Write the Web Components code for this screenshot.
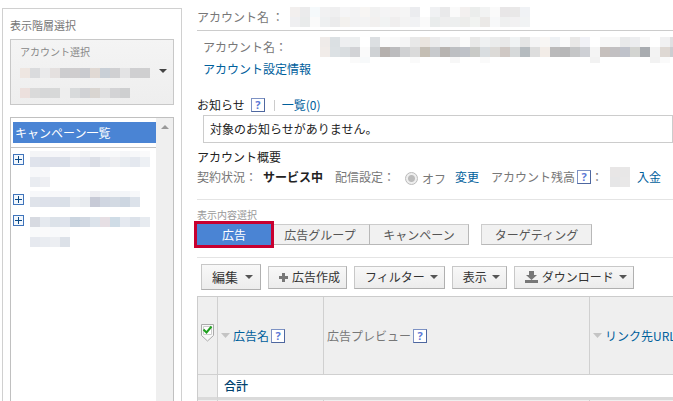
<!DOCTYPE html>
<html lang="ja">
<head>
<meta charset="utf-8">
<title>広告管理</title>
<style>
  body {
    margin: 0;
    overflow: hidden;
    background: #fff;
    color: #222;
    font: 12px/20px "Noto Sans CJK JP", "Liberation Sans", sans-serif;
  }
</style>
</head>
<body>
<ad-console></ad-console>

<script>
// Masked value: each row is "height colour colour ...", "-" leaves a cell empty
class MaskedValue extends HTMLElement {
  connectedCallback() {
    this.attachShadow({ mode: 'open' });
    let y = 0;
    let width = 0;
    let rects = '';
    this.getAttribute('rows').split(';').forEach((row) => {
      const [h, ...cells] = row.trim().split(/\s+/);
      cells.forEach((c, i) => {
        if (c !== '-') rects += `<rect x="${i * 10}" y="${y}" width="10" height="${h}" fill="#${c}"/>`;
      });
      width = Math.max(width, cells.length * 10);
      y += Number(h);
    });
    this.shadowRoot.innerHTML = `
      <style>
        :host { display: block; flex: none; }
        svg { display: block; }
      </style>
      <svg width="${width}" height="${y}" shape-rendering="crispEdges" aria-hidden="true">${rects}</svg>
    `;
  }
}

class HelpIcon extends HTMLElement {
  connectedCallback() {
    this.attachShadow({ mode: 'open' });
    this.shadowRoot.innerHTML = `
      <style>
        :host { display: inline-flex; vertical-align: middle; flex: none; }
        button {
          width: 14px;
          height: 14px;
          padding: 0;
          border: 1px solid #7d92c4;
          border-right-color: #4e679f;
          border-bottom-color: #4e679f;
          background: #fff;
          color: #5b78d6;
          font: bold 11px/12px "Open Sans", sans-serif;
          text-align: center;
        }
      </style>
      <button type="button">?</button>
    `;
  }
}

class SidePanel extends HTMLElement {
  connectedCallback() {
    this.attachShadow({ mode: 'open' });
    this.shadowRoot.innerHTML = `
      <style>
        :host {
          display: flex;
          flex-direction: column;
          box-sizing: border-box;
          flex: none;
          width: 180px;
          margin: 8px 0 0 2px;
          padding: 6px 7px 7px;
          border: 1px solid #d0d0d0;
        }
        h2 {
          margin: 0 0 4px;
          color: #777;
          font-size: 11px;
          font-weight: normal;
          line-height: 20px;
        }
      </style>
      <h2>表示階層選択</h2>
      <slot></slot>
    `;
  }
}

class AccountPicker extends HTMLElement {
  connectedCallback() {
    this.attachShadow({ mode: 'open' });
    this.shadowRoot.innerHTML = `
      <style>
        :host { display: block; margin-bottom: 12px; }
        button {
          display: flex;
          align-items: center;
          justify-content: space-between;
          box-sizing: border-box;
          width: 100%;
          height: 66px;
          padding: 0 6px 2px 9px;
          border: 1px solid #c8c8c8;
          background: linear-gradient(#f4f4f4, #eee);
          color: #888;
          font: inherit;
          text-align: left;
        }
        .name { display: block; font-size: 10px; line-height: 16px; margin-bottom: 8px; }
        masked-value + masked-value { margin-top: 10px; }
      </style>
      <button type="button">
        <span>
          <span class="name">アカウント選択</span>
          <masked-value rows="10 eee6e1 dadbdd eaeaeb e4e0df cdcdcf cfcdce cacbcf e0d9d4 c9cfd6 d0d0d2 e3e3e4 cfcfd1 cfcfd0"></masked-value>
          <masked-value rows="10 ece0dd dadada d6d7d8 d7d8d8 eeeeee d8dadb d1d2d5 d9d5d1 e0e0e1 d3d3d5 cecfd0"></masked-value>
        </span>
        <svg width="8" height="4" aria-hidden="true"><path d="M0 0h8L4 4z" fill="#444"/></svg>
      </button>
    `;
  }
}

class CampaignTree extends HTMLElement {
  connectedCallback() {
    this.attachShadow({ mode: 'open' });
    this.shadowRoot.innerHTML = `
      <style>
        :host {
          display: flex;
          flex: 1;
          border: 1px solid #c0c0c0;
        }
        .tree { flex: 1; min-width: 0; }
        .head { padding: 4px 0 4px 2px; border-bottom: 1px solid #c4c4c4; }
        .head a {
          display: block;
          padding: 0 2px;
          background: #4a84d4;
          color: #fff;
          line-height: 21px;
          text-decoration: none;
        }
        ul { margin: 0; padding: 3px 0 0 2px; list-style: none; }
        li { display: flex; align-items: flex-start; gap: 6px; margin-bottom: 4px; }
        button {
          display: flex;
          align-items: center;
          justify-content: center;
          width: 11px;
          height: 11px;
          margin: 3px 0 0;
          padding: 0;
          border: 1px solid #3f74bb;
          background: #f2f7fd;
        }
        .bar {
          width: 17px;
          padding-top: 7px;
          box-sizing: border-box;
          background: #efefef;
        }
        .bar svg { display: block; margin: 0 auto; }
      </style>
      <div class="tree">
        <div class="head"><a href="#">キャンペーン一覧</a></div>
        <ul></ul>
      </div>
      <div class="bar" aria-hidden="true"><svg width="8" height="4"><path d="M0 4h8L4 0z" fill="#999"/></svg></div>
    `;
    const campaigns = [
      '6 f4f5f7 f5f5f8 f6f6f9 f4f5f8 f8f8fa f3f4f6 f7f7f9 f9f9fb f8f9fa f5f6f8 f7f8fa fafafb;10 dfe3ec dde1ea dde0ea dce1ea e9ebf1 e4e7ef dcdfe7 e7eaf0 eeeff2 e8ecf1 e4e8ef edf0f4;10 f7f8fa f8f8fa;10 e9ecf1 eeeff3',
      '6 f7f8fa f7f8fb f8f8fa f8f8fb fafbfc f8f9fb eeeef2 f2f4f6 f4f5f7 f3f5f8 f7f8fa;10 dfe3ea dde1ea dce0e9 dae0e8 edeff2 e8ebef c7cad6 d0d6e1 d3dae3 cdd6e1 dce2ea;1 -',
      '5 - ;10 d7dae1 e5e9ef dce2e9 dee3ec cbd5e0 d1d8e2 dce3eb e6dfe4 cfdce6 e5e9f0 dce2ea e7ebf0;10 f9fafb fafafb f8f9fb f9fafb;10 e6e9ef e9ecf1 eceef2 dce1e8',
    ];
    this.shadowRoot.querySelector('ul').innerHTML = campaigns.map((rows) => `
      <li>
        <button type="button" aria-label="開く"><svg width="7" height="7"><path d="M3 0h1v3h3v1H4v3H3V4H0V3h3z" fill="#0b4a86"/></svg></button>
        <masked-value rows="${rows}"></masked-value>
      </li>
    `).join('');
  }
}

class AccountSummary extends HTMLElement {
  connectedCallback() {
    this.attachShadow({ mode: 'open' });
    this.shadowRoot.innerHTML = `
      <style>
        :host { display: block; white-space: nowrap; }
        a { color: #00609c; text-decoration: none; }
        .row { display: flex; height: 20px; color: #777; }
        .row span { flex: none; }
        .title { padding: 7px 0 3px; border-bottom: 1px solid #ccc; }
        .title span { width: 93px; }
        .detail { padding: 6px 0 2px 6px; }
        .detail span { width: 117px; }
        .settings { padding-left: 6px; }
        .news { display: flex; align-items: center; margin-top: 16px; }
        .news help-icon { margin: 0 9px 0 6px; }
        .news a { margin-left: 7px; }
        .sep { width: 1px; height: 11px; background: #ccc; }
        .message {
          margin: 0 0 4px 6px;
          padding: 0 6px;
          border: 1px solid #ccc;
          line-height: 26px;
        }
        .status {
          display: flex;
          align-items: center;
          padding-bottom: 12px;
          border-bottom: 1px solid #e4e4e4;
          color: #777;
        }
        .status b { margin: 0 12px 0 6px; color: #222; }
        .status label { display: flex; align-items: center; gap: 4px; margin: 3px 9px 0 10px; line-height: 17px; }
        .status help-icon { margin-left: 2px; }
        .status masked-value { margin: 0 7px; }
        .status .link { margin-right: 12px; }
        input {
          appearance: none;
          width: 13px;
          height: 13px;
          margin: 0;
          border: 1px solid #bbb;
          border-radius: 50%;
          background: radial-gradient(#bbb 0 3px, #eee 4px);
        }
      </style>
      <div class="row title">
        <span>アカウント名 ：</span>
        <masked-value rows="10 f2efee ebebec f5f9fb f1f1f2 efeff0 f5f5f6 f3f3f4 f7f5f3 f1f1f1 f4f4f5 f5f3f3 f5f5f5 ebecef - f0f1f3 e9e9ea fafafa f3f0ef ebedec f2f3f3 fafafa e8e6e7 e9e8e8 f0f2f5;10 efeff1 e9ebeb fafafa eef0f1 ebebec f3f1ee f2f2f3 f3f3f3 f2f0ef f1f3f3 f0eeee f3f3f3 f1f2f4 fafafa e9ecec eeeeee edefef ededeb f1f3f1 ebe9e7 f7f8f9 eff0f0 f2f1f2 f1f3f4"></masked-value>
      </div>
      <div class="row detail">
        <span>アカウント名：</span>
        <masked-value rows="10 efebe9 dbe0e3 eeeff1 edeff0 - dcdfe2 fafafa f8f8f8 f5f5f6 e8e8e8 eae5df ebebec f0f2f3 efefef fafafa e9e9e8 eff1f2 ebecec e9e9e9 f0f3f4 e4e5e5 f4f4f5 f8f6f4 eef1f4 fafafa e9e8e7 f0f1f6 - f7f7f7 f7f7f7 e8e9ea ecedef f7f7f7 - f1f1f2 e0e0e2;10 f1ece9 dce1e4 d9dde0 d2d3d6 fafafa cfd2d5 b5b0ad bcbcbe d0d1d3 dadada c4beb4 c8cacd b7b4b1 bdbfc2 bfc2c8 c9cac7 d9dde0 dcdad7 cfc8c4 d6d9da b5bbbf dddddd f2ece7 bababb b7b7b8 c5c6c7 ced0d5 f4f4f4 c6c0bd c2c0c2 bfc2ca d3d4d1 a9acb0 f3f3f3 ded8d3 cccdd1;6 - - - fafafa f7f9fa - - - - fafafa - - - f7f7f7 - - fafafa - - - - - - - - - - f2f2f2 - - - - - f2f2f2 fafafa -"></masked-value>
      </div>
      <div class="settings"><a href="#">アカウント設定情報</a></div>
      <div class="news">お知らせ<help-icon></help-icon><i class="sep"></i><a href="#">一覧(0)</a></div>
      <div class="message">対象のお知らせがありません。</div>
      <div>アカウント概要</div>
      <div class="status">
        契約状況：<b>サービス中</b>配信設定：
        <label><input type="radio" checked disabled>オフ</label>
        <a class="link" href="#">変更</a>
        アカウント残高<help-icon></help-icon>：
        <masked-value rows="10 e8e6e6 e8e7e7;10 e6e6e7 e9e8e8"></masked-value>
        <a href="#">入金</a>
      </div>
    `;
  }
}

class ViewTabs extends HTMLElement {
  connectedCallback() {
    this.attachShadow({ mode: 'open' });
    this.shadowRoot.innerHTML = `
      <style>
        :host {
          display: block;
          padding: 7px 0 12px;
          border-bottom: 1px solid #e4e4e4;
        }
        h3 {
          margin: 0 0 1px;
          color: #999;
          font-size: 10px;
          font-weight: normal;
          line-height: 16px;
        }
        .tabs { display: flex; }
        button {
          box-sizing: border-box;
          width: 99px;
          height: 21px;
          padding: 0;
          border: 1px solid #ccc;
          border-right-color: #b8b8b8;
          border-bottom-color: #b8b8b8;
          border-left: 0;
          background: #f1f1f1;
          color: #555;
          font: inherit;
          line-height: 19px;
          white-space: nowrap;
        }
        .on {
          position: relative;
          width: 74px;
          border: 0;
          outline: 3px solid #c8002f;
          background: #4a84d4;
          color: #fff;
        }
        .apart { width: 111px; margin-left: 12px; border-left: 1px solid #ccc; }
      </style>
      <h3>表示内容選択</h3>
      <div class="tabs">
        <button type="button" class="on">広告</button>
        <button type="button">広告グループ</button>
        <button type="button">キャンペーン</button>
        <button type="button" class="apart">ターゲティング</button>
      </div>
    `;
  }
}

class ToolButton extends HTMLElement {
  connectedCallback() {
    this.attachShadow({ mode: 'open' });
    const arrow = this.hasAttribute('menu')
      ? '<svg width="8" height="4" aria-hidden="true"><path d="M0 0h8L4 4z" fill="#555"/></svg>'
      : '';
    this.shadowRoot.innerHTML = `
      <style>
        :host { display: block; flex: none; }
        button {
          display: flex;
          align-items: center;
          gap: 5px;
          box-sizing: border-box;
          height: 23px;
          padding: 0 6px 0 10px;
          border: 1px solid #c8c8c8;
          border-right-color: #b0b0b0;
          border-bottom-color: #b0b0b0;
          background: linear-gradient(#f8f8f8, #ececec);
          color: #333;
          font: inherit;
          white-space: nowrap;
        }
        :host([large]) button { height: 26px; gap: 7px; padding: 0 7px 0 10px; font-size: 13px; }
        ::slotted(svg) { margin-right: -1px; }
      </style>
      <button type="button"><slot name="icon"></slot><slot></slot>${arrow}</button>
    `;
  }
}

class AdTable extends HTMLElement {
  connectedCallback() {
    this.attachShadow({ mode: 'open' });
    this.shadowRoot.innerHTML = `
      <style>
        :host { display: block; }
        table {
          width: 100%;
          min-width: 540px;
          border-collapse: separate;
          border-spacing: 0;
          border-top: 1px solid #ccc;
          border-left: 1px solid #ccc;
          table-layout: fixed;
          white-space: nowrap;
        }
        th, td {
          box-sizing: border-box;
          padding: 0 3px;
          border-right: 1px solid #d0d0d0;
          border-bottom: 1px solid #d0d0d0;
          background: #efefef;
          font-weight: normal;
          text-align: left;
        }
        th { height: 78px; color: #777; }
        td { height: 22px; }
        .pick { width: 20px; padding-bottom: 6px; }
        .name { width: 106px; }
        .preview { width: 266px; }
        .head { display: flex; align-items: center; }
        .head a { margin-left: 3px; color: #00609c; text-decoration: none; }
        .head help-icon { margin-left: 2px; }
        .total td { height: 25px; border-bottom: 3px solid #dadada; }
        .total .sum { padding-left: 6px; background: #fff; color: #00426e; font-weight: 500; }
        svg { display: block; flex: none; }
      </style>
      <table>
        <thead>
          <tr>
            <th class="pick">
              <svg width="13" height="18" role="img" aria-label="選択">
                <path d="M.5.5h12v11l-6 5.5-6-5.5z" fill="#f8f8f8" stroke="#aaa"/>
                <path d="M2.500 2.500h8v8h-8z" fill="#fff" stroke="#ccc"/>
                <path d="M2.500 5.500l3 3 5-6" fill="none" stroke="#20a020" stroke-width="2"/>
              </svg>
            </th>
            <th class="name"><div class="head"><svg width="9" height="5"><path d="M0 0h9L4.500 5z" fill="#c4c4c4"/></svg><a href="#">広告名</a><help-icon></help-icon></div></th>
            <th class="preview"><div class="head">広告プレビュー<help-icon></help-icon></div></th>
            <th><div class="head"><svg width="9" height="5"><path d="M0 0h9L4.500 5z" fill="#c4c4c4"/></svg><a href="#">リンク先URL</a></div></th>
          </tr>
        </thead>
        <tbody>
          <tr class="total"><td></td><td class="sum" colspan="3">合計</td></tr>
          <tr><td></td><td></td><td></td><td></td></tr>
        </tbody>
      </table>
    `;
  }
}

class AdConsole extends HTMLElement {
  connectedCallback() {
    this.attachShadow({ mode: 'open' });
    this.shadowRoot.innerHTML = `
      <style>
        :host { display: flex; gap: 12px; }
        main {
          flex: 1;
          min-width: 0;
          padding: 0 0 24px 3px;
          overflow: hidden;
        }
        .tools {
          display: flex;
          align-items: center;
          gap: 7px;
          padding: 6px 0 6px 4px;
        }
      </style>
      <side-panel>
        <account-picker></account-picker>
        <campaign-tree></campaign-tree>
      </side-panel>
      <main>
        <account-summary></account-summary>
        <view-tabs></view-tabs>
        <div class="tools">
          <tool-button large menu>編集</tool-button>
          <tool-button>
            <svg slot="icon" width="9" height="9"><path d="M3 0h3v3h3v3H6v3H3V6H0V3h3z" fill="#777"/></svg>広告作成
          </tool-button>
          <tool-button menu>フィルター</tool-button>
          <tool-button menu>表示</tool-button>
          <tool-button menu>
            <svg slot="icon" width="13" height="12"><path d="M4 0h5v4h3L6.500 9 1 4h3zM0 9h13v3H0z" fill="#777"/></svg>ダウンロード
          </tool-button>
        </div>
        <ad-table></ad-table>
      </main>
    `;
  }
}

customElements.define('masked-value', MaskedValue);
customElements.define('help-icon', HelpIcon);
customElements.define('side-panel', SidePanel);
customElements.define('account-picker', AccountPicker);
customElements.define('campaign-tree', CampaignTree);
customElements.define('account-summary', AccountSummary);
customElements.define('view-tabs', ViewTabs);
customElements.define('tool-button', ToolButton);
customElements.define('ad-table', AdTable);
customElements.define('ad-console', AdConsole);
</script>
</body>
</html>
